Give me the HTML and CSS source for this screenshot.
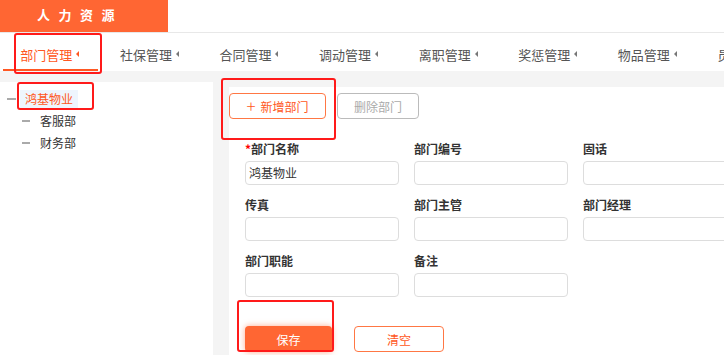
FILE: index.html
```html
<!DOCTYPE html>
<html lang="zh-CN">
<head>
<meta charset="utf-8">
<title>人力资源 - 部门管理</title>
<link rel="stylesheet" href="styles.css">
</head>
<body>
<header class="topbar">
  <div class="brand">人力资源</div>
</header>
<nav class="tabs">
  <a class="tab active">部门管理<i class="caret"></i></a>
  <a class="tab">社保管理<i class="caret"></i></a>
  <a class="tab">合同管理<i class="caret"></i></a>
  <a class="tab">调动管理<i class="caret"></i></a>
  <a class="tab">离职管理<i class="caret"></i></a>
  <a class="tab">奖惩管理<i class="caret"></i></a>
  <a class="tab">物品管理<i class="caret"></i></a>
  <a class="tab">员工管理<i class="caret"></i></a>
</nav>
<main class="main">
  <aside class="tree">
    <div class="tree-root"><span class="dash"></span><span class="node selected">鸿基物业</span></div>
    <div class="tree-children">
      <div class="tree-child"><span class="dash"></span><span class="node">客服部</span></div>
      <div class="tree-child"><span class="dash"></span><span class="node">财务部</span></div>
    </div>
  </aside>
  <section class="panel">
    <div class="toolbar">
      <button class="btn btn-add"><span class="plus">+</span>新增部门</button>
      <button class="btn btn-del">删除部门</button>
    </div>
    <div class="form-grid">
      <div class="field"><label><em>*</em>部门名称</label><div class="input">鸿基物业</div></div>
      <div class="field"><label>部门编号</label><div class="input"></div></div>
      <div class="field"><label>固话</label><div class="input"></div></div>
      <div class="field"><label>传真</label><div class="input"></div></div>
      <div class="field"><label>部门主管</label><div class="input"></div></div>
      <div class="field"><label>部门经理</label><div class="input"></div></div>
      <div class="field"><label>部门职能</label><div class="input"></div></div>
      <div class="field"><label>备注</label><div class="input"></div></div>
    </div>
    <div class="actions">
      <button class="btn btn-save">保存</button>
      <button class="btn btn-clear">清空</button>
    </div>
  </section>
</main>
<div class="mark mark-tab"></div>
<div class="mark mark-tree"></div>
<div class="mark mark-tools"></div>
<div class="mark mark-save"></div>
</body>
</html>
```

FILE: styles.css
```css
* { box-sizing: border-box; }
html, body { margin: 0; padding: 0; }
body {
  width: 724px;
  height: 355px;
  overflow: hidden;
  background: #f4f4f4;
  font-family: "Noto Sans CJK SC", "Microsoft YaHei", sans-serif;
  font-size: 12px;
  color: #333;
  position: relative;
}

.topbar {
  height: 33px;
  background: #fff;
  border-bottom: 1px solid #e8e8e8;
  display: flex;
}
.brand {
  width: 168px;
  height: 32px;
  background: #ff6633;
  color: #fff;
  font-weight: bold;
  font-size: 13px;
  letter-spacing: 8.5px;
  line-height: 30px;
  padding-left: 37px;
}

.tabs {
  height: 38px;
  background: #fff;
  display: flex;
  overflow: hidden;
}
.tab {
  flex: 0 0 99.6px;
  display: flex;
  align-items: center;
  justify-content: center;
  padding-top: 4px;
  font-size: 13px;
  color: #555;
  position: relative;
}
.tab.active { color: #ff5722; }
.tab.active::after {
  content: "";
  position: absolute;
  left: 3px;
  right: 2px;
  bottom: 0;
  height: 2px;
  background: #ff5722;
}
.caret {
  display: inline-block;
  width: 0;
  height: 0;
  margin-left: 4px;
  border-top: 3px solid transparent;
  border-bottom: 3px solid transparent;
  border-right: 3px solid #777;
}
.tab.active .caret { border-right-color: #ff5722; }

.main {
  display: flex;
  gap: 16px;
  padding-top: 11px;
  height: 284px;
}
.tree {
  flex: 0 0 213px;
  background: #fff;
  padding-top: 8px;
}
.tree-root {
  display: flex;
  align-items: center;
  height: 18px;
  padding-left: 7px;
}
.tree-root .dash {
  width: 9px;
  height: 2px;
  background: #aaa;
  margin-right: 4px;
}
.node {
  line-height: 18px;
  color: #333;
}
.node.selected {
  background: #eef5fd;
  color: #ff5722;
  padding: 0 5px;
}
.tree-children {
  padding-top: 2px;
}
.tree-child {
  display: flex;
  align-items: center;
  height: 22px;
  padding-left: 22px;
}
.tree-child .dash {
  width: 8px;
  height: 2px;
  background: #aaa;
  margin-right: 10px;
}

.panel {
  flex: 1;
  background: #fff;
  margin-top: 5px;
  min-width: 0;
}
.toolbar {
  display: flex;
  gap: 11px;
  padding-top: 6px;
}
.btn {
  height: 26px;
  border-radius: 4px;
  font-family: inherit;
  font-size: 12px;
  background: #fff;
  padding: 0;
  display: flex;
  align-items: center;
  justify-content: center;
}
.btn-add {
  width: 97px;
  border: 1px solid #ff7744;
  color: #ff5722;
}
.plus {
  font-size: 17px;
  font-weight: 300;
  line-height: 1;
  margin-right: 5px;
  margin-top: -2px;
}
.btn-del {
  width: 82px;
  border: 1px solid #bbb;
  color: #aaa;
}

.form-grid {
  display: grid;
  grid-template-columns: repeat(3, 154px);
  column-gap: 15px;
  row-gap: 11px;
  margin: 21px 0 0 16px;
}
.field label {
  display: block;
  font-weight: bold;
  line-height: 18px;
  margin-bottom: 3px;
  color: #333;
}
.field em {
  font-style: normal;
  color: #f00;
}
.input {
  height: 24px;
  border: 1px solid #ddd;
  border-radius: 4px;
  padding-left: 3px;
  line-height: 22px;
  color: #333;
}

.actions {
  display: flex;
  gap: 22px;
  margin: 29px 0 0 16px;
}
.btn-save {
  width: 87px;
  border: none;
  background: #ff6633;
  color: #fff;
  box-shadow: 0 0 6px rgba(255, 102, 51, 0.55);
}
.btn-clear {
  width: 90px;
  border: 1px solid #ff7744;
  color: #ff5722;
}

.mark {
  position: absolute;
  border: 2px solid #ff1a1a;
  border-radius: 3px;
  pointer-events: none;
}
.mark-tab { left: 14px; top: 33px; width: 88px; height: 41px; }
.mark-tree { left: 17px; top: 82px; width: 77px; height: 28px; }
.mark-tools { left: 221px; top: 78px; width: 115px; height: 62px; }
.mark-save { left: 237px; top: 300px; width: 97px; height: 52px; }
```
